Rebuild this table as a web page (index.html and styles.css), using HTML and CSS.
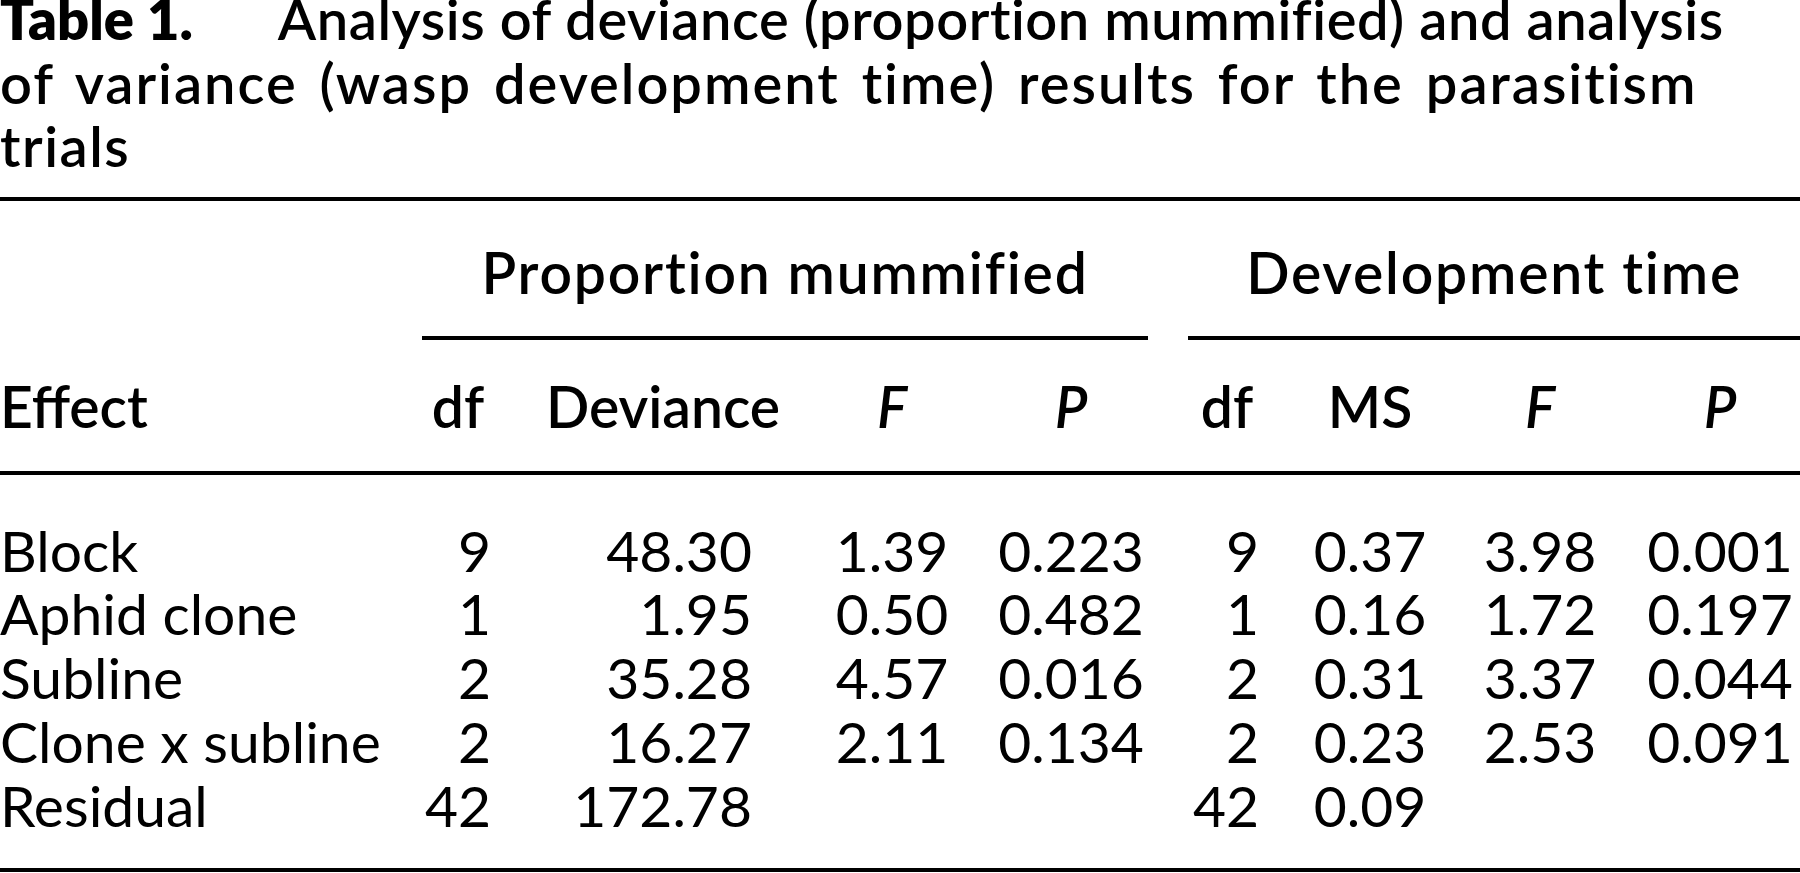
FILE: index.html
```html
<!DOCTYPE html>
<html lang="en">
<head>
<meta charset="utf-8">
<title>Table 1</title>
<link rel="stylesheet" href="styles.css">
</head>
<body>
<div class="page">
  <p class="caption"><span class="line line-1"><span class="label">Table 1.</span>Analysis of deviance (proportion mummified) and analysis</span><br><span class="line line-2">of variance (wasp development time) results for the parasitism</span><br><span class="line line-3">trials</span></p>
  <table class="anova">
    <colgroup>
      <col class="w-effect">
      <col class="w-df">
      <col class="w-dev">
      <col class="w-f">
      <col class="w-p">
      <col class="w-df2">
      <col class="w-ms">
      <col class="w-f2">
      <col class="w-p2">
    </colgroup>
    <thead>
      <tr class="spanrow">
        <th class="blank"></th>
        <th colspan="4" class="span span-left"><div class="span-label">Proportion mummified</div></th>
        <th colspan="4" class="span span-right"><div class="span-label">Development time</div></th>
      </tr>
      <tr class="colrow">
        <th class="effect">Effect</th>
        <th class="df">df</th>
        <th class="dev">Deviance</th>
        <th class="f"><i>F</i></th>
        <th class="p"><i>P</i></th>
        <th class="df2">df</th>
        <th class="ms">MS</th>
        <th class="f2"><i>F</i></th>
        <th class="p2"><i>P</i></th>
      </tr>
    </thead>
    <tbody>
      <tr class="first">
        <td class="effect">Block</td>
        <td class="df">9</td>
        <td class="dev">48.30</td>
        <td class="f">1.39</td>
        <td class="p">0.223</td>
        <td class="df2">9</td>
        <td class="ms">0.37</td>
        <td class="f2">3.98</td>
        <td class="p2">0.001</td>
      </tr>
      <tr>
        <td class="effect">Aphid clone</td>
        <td class="df">1</td>
        <td class="dev">1.95</td>
        <td class="f">0.50</td>
        <td class="p">0.482</td>
        <td class="df2">1</td>
        <td class="ms">0.16</td>
        <td class="f2">1.72</td>
        <td class="p2">0.197</td>
      </tr>
      <tr>
        <td class="effect">Subline</td>
        <td class="df">2</td>
        <td class="dev">35.28</td>
        <td class="f">4.57</td>
        <td class="p">0.016</td>
        <td class="df2">2</td>
        <td class="ms">0.31</td>
        <td class="f2">3.37</td>
        <td class="p2">0.044</td>
      </tr>
      <tr>
        <td class="effect">Clone x subline</td>
        <td class="df">2</td>
        <td class="dev">16.27</td>
        <td class="f">2.11</td>
        <td class="p">0.134</td>
        <td class="df2">2</td>
        <td class="ms">0.23</td>
        <td class="f2">2.53</td>
        <td class="p2">0.091</td>
      </tr>
      <tr class="last">
        <td class="effect">Residual</td>
        <td class="df">42</td>
        <td class="dev">172.78</td>
        <td class="f"></td>
        <td class="p"></td>
        <td class="df2">42</td>
        <td class="ms">0.09</td>
        <td class="f2"></td>
        <td class="p2"></td>
      </tr>
    </tbody>
  </table>
</div>
</body>
</html>
```
FILE: styles.css
```css
html, body {
  margin: 0;
  padding: 0;
  background: #ffffff;
}

body {
  color: #000000;
  font-family: Lato, "Open Sans", "Liberation Sans", sans-serif;
  overflow: hidden;
}

.page {
  width: 1800px;
  height: 873px;
  overflow: hidden;
}

.caption {
  margin: -13px 0 19px 0;
  font-size: 56px;
  line-height: 63.5px;
  font-weight: 600;
  white-space: nowrap;
}

.caption .label {
  font-weight: 800;
  letter-spacing: 0;
  margin-right: 85px;
}

.caption .line-1 {
  letter-spacing: 0.55px;
}

.caption .line-2 {
  letter-spacing: 2px;
  word-spacing: 6px;
}

.caption .line-3 {
  letter-spacing: 1.5px;
}

.anova {
  width: 1800px;
  table-layout: fixed;
  border-collapse: separate;
  border-spacing: 0;
  border-top: 4px solid #000;
  border-bottom: 4px solid #000;
  font-size: 57px;
}

.w-effect { width: 422px; }
.w-df { width: 78px; }
.w-dev { width: 326px; }
.w-f { width: 132px; }
.w-p { width: 210px; }
.w-df2 { width: 118px; }
.w-ms { width: 168px; }
.w-f2 { width: 172px; }
.w-p2 { width: 174px; }

.anova th,
.anova td {
  padding: 0;
  white-space: nowrap;
  vertical-align: top;
}

.anova th {
  font-weight: 600;
  line-height: 64px;
  text-align: center;
}

.anova th i {
  font-style: italic;
}

.spanrow th {
  padding-top: 39px;
}

.span-label {
  padding-bottom: 32px;
  border-bottom: 4px solid #000;
  text-align: center;
  letter-spacing: 1.8px;
}

.span-left .span-label {
  margin-right: 20px;
}

.span-right .span-label {
  margin-left: 20px;
}

.colrow th {
  padding-top: 34px;
  padding-bottom: 33px;
  border-bottom: 4px solid #000;
}

.anova td {
  font-weight: 400;
  line-height: 63.75px;
  text-align: center;
}

.anova tr.first td {
  padding-top: 44px;
}

.anova tr.last td {
  padding-bottom: 31px;
}

.anova .effect {
  text-align: left;
}

.anova th.df {
  padding-right: 6px;
}

.anova td.df {
  text-align: right;
  padding-right: 9px;
}

.anova td.dev {
  text-align: right;
  padding-right: 74px;
}

.anova .p {
  padding-left: 16px;
}

.anova td.df2 {
  text-align: right;
  padding-right: 27px;
}

.anova .p2 {
  padding-left: 14px;
}
```
